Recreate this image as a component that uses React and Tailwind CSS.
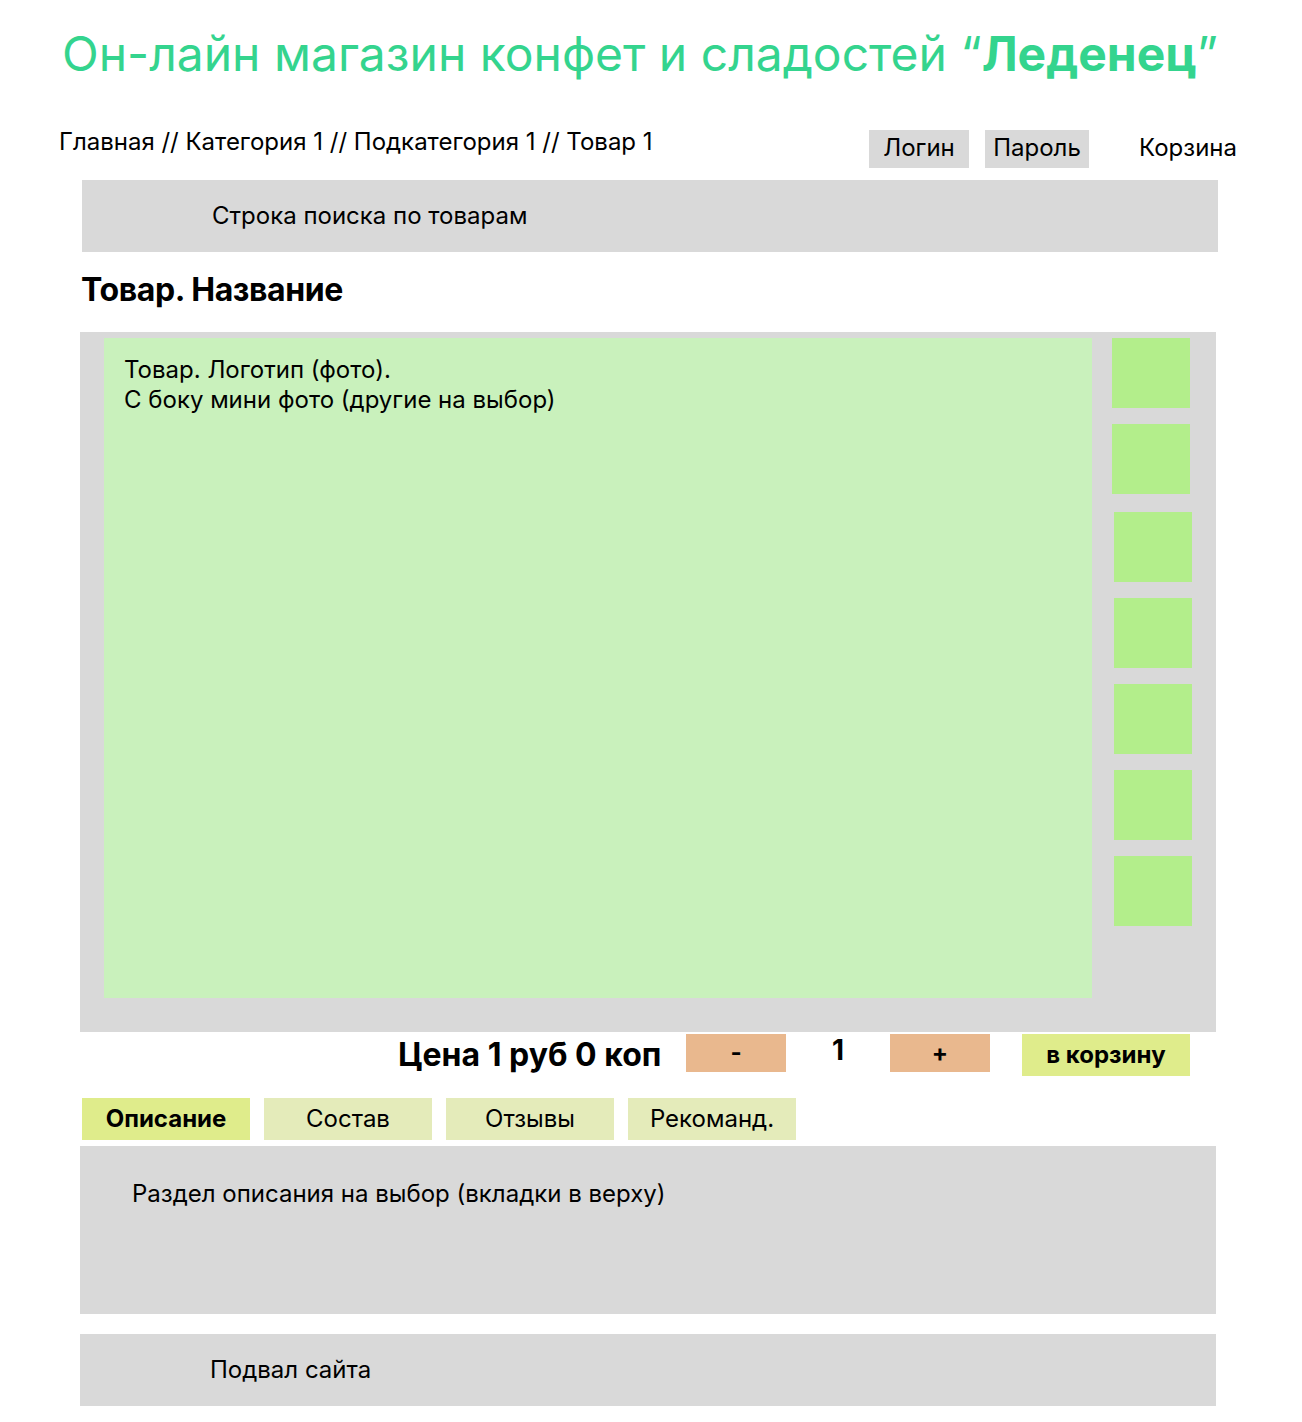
import { Fragment } from 'react'

const thumbs = [
  'ml-[20px]',
  'ml-[20px] mt-[16px]',
  'ml-[22px] mt-[18px]',
  'ml-[22px] mt-[16px]',
  'ml-[22px] mt-[16px]',
  'ml-[22px] mt-[16px]',
  'ml-[22px] mt-[16px]',
]

const tabs = [
  { label: 'Описание', active: true },
  { label: 'Состав' },
  { label: 'Отзывы' },
  { label: 'Рекоманд.' },
]

export default function App() {
  return (
    <div className="w-[1302px] min-h-[1422px] bg-white font-['Inter',sans-serif] text-black text-[24px] pb-[16px]">
      <h1 className="pl-[62px] pt-[22px] text-[48px] leading-[64px] text-[#34d48e]">
        Он-лайн магазин конфет и сладостей “<b className="font-bold">Леденец</b>”
      </h1>

      <div className="flex items-start mt-[44px] h-[38px]">
        <div className="pl-[59px] leading-[24px]">Главная // Категория 1 // Подкатегория 1 // Товар 1</div>
        <div className="ml-auto flex items-start">
          <div className="w-[100px] h-[38px] bg-[#d9d9d9] flex items-center justify-center pb-[2px]">Логин</div>
          <div className="ml-[16px] w-[104px] h-[38px] bg-[#d9d9d9] flex items-center justify-center pb-[2px]">Пароль</div>
          <div className="ml-[50px] mr-[65px] mt-[6px] leading-[24px]">Корзина</div>
        </div>
      </div>

      <div className="ml-[82px] mt-[12px] w-[1136px] h-[72px] bg-[#d9d9d9] flex items-center pl-[130px]">
        Строка поиска по товарам
      </div>

      <h2 className="ml-[81px] mt-[18px] text-[32px] font-bold leading-[40px] tracking-[-0.4px]">Товар. Название</h2>

      <div className="ml-[80px] mt-[22px] w-[1136px] h-[700px] bg-[#d9d9d9] flex items-start pt-[6px] pl-[24px]">
        <div className="w-[988px] h-[660px] bg-[#c9f1bc] pl-[20px] pt-[17px] leading-[30px]">
          Товар. Логотип (фото).
          <br />
          С боку мини фото (другие на выбор)
        </div>
        <div className="flex flex-col">
          {thumbs.map((c, i) => (
            <div key={i} className={`${c} w-[78px] h-[70px] bg-[#b3ee8b]`} />
          ))}
        </div>
      </div>

      <div className="flex items-start mt-[2px] h-[44px]">
        <div className="ml-[398px] w-[264px] whitespace-nowrap mt-[1px] text-[32px] font-bold leading-[40px]">Цена 1 руб 0 коп</div>
        <div className="ml-[24px] w-[100px] h-[38px] bg-[#e9b88e] flex items-center justify-center font-bold">-</div>
        <div className="ml-[46px] w-[14px] leading-[32px] text-[28px] font-bold">1</div>
        <div className="ml-[44px] w-[100px] h-[38px] bg-[#e9b88e] flex items-center justify-center font-bold">+</div>
        <div className="ml-[32px] w-[168px] h-[42px] bg-[#dfec8b] flex items-center justify-center font-bold">в корзину</div>
      </div>

      <div className="flex gap-[14px] ml-[82px] mt-[20px]">
        {tabs.map((t) => (
          <Fragment key={t.label}>
            <div
              className={
                t.active
                  ? 'w-[168px] h-[42px] bg-[#dfec8b] flex items-center justify-center font-bold'
                  : 'w-[168px] h-[42px] bg-[#e4ebba] flex items-center justify-center'
              }
            >
              {t.label}
            </div>
          </Fragment>
        ))}
      </div>

      <div className="ml-[80px] mt-[6px] w-[1136px] h-[168px] bg-[#d9d9d9] pl-[52px] pt-[34px] leading-[28px]">
        Раздел описания на выбор (вкладки в верху)
      </div>

      <div className="ml-[80px] mt-[20px] w-[1136px] h-[72px] bg-[#d9d9d9] flex items-center pl-[130px]">
        Подвал сайта
      </div>
    </div>
  )
}
